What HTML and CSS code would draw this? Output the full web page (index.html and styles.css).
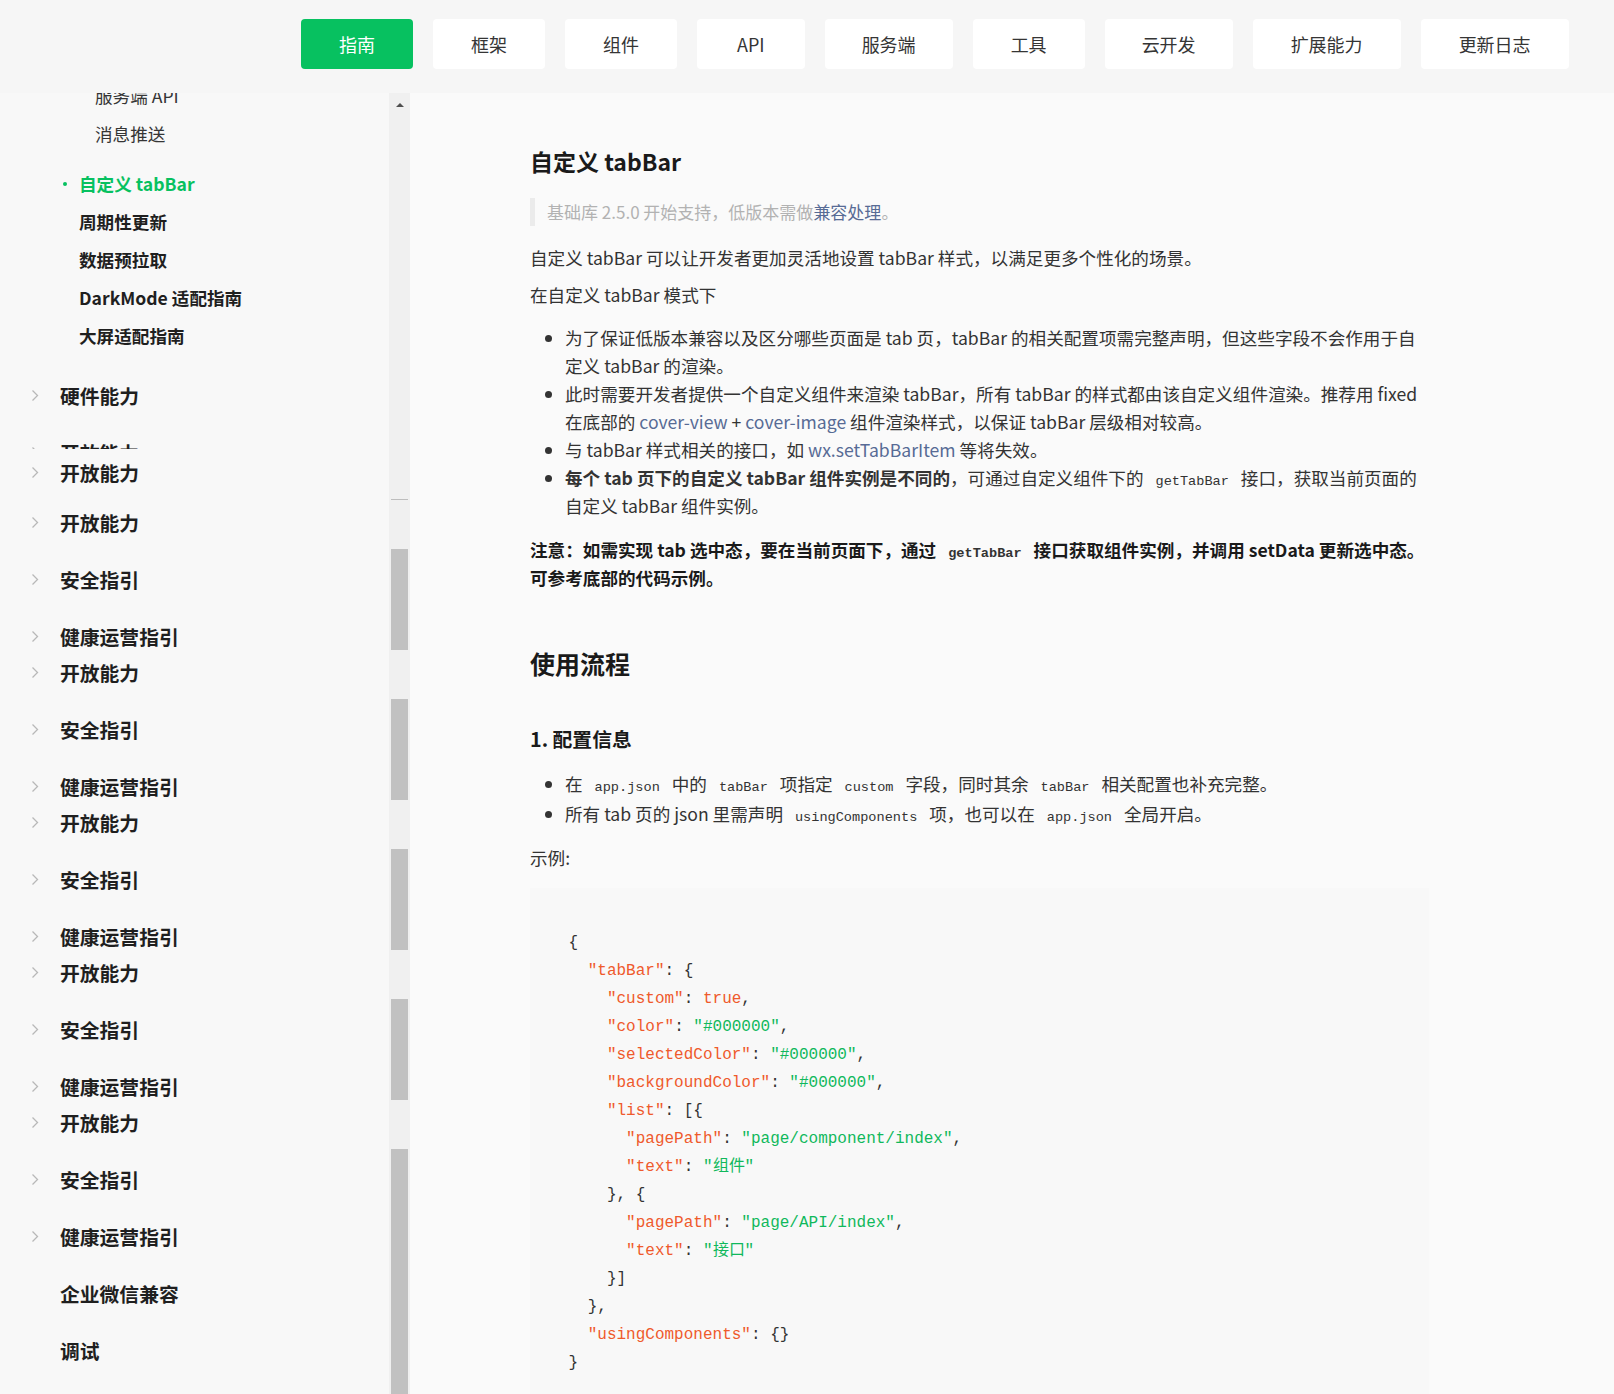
FILE: index.html
```html
<!DOCTYPE html>
<html lang="zh-CN">
<head>
<meta charset="utf-8">
<title>自定义 tabBar</title>
<link rel="stylesheet" href="styles.css">
</head>
<body>
<header class="topbar">
  <nav class="nav">
    <a class="nav-btn active">指南</a>
    <a class="nav-btn">框架</a>
    <a class="nav-btn">组件</a>
    <a class="nav-btn api">API</a>
    <a class="nav-btn w3">服务端</a>
    <a class="nav-btn">工具</a>
    <a class="nav-btn w3">云开发</a>
    <a class="nav-btn">扩展能力</a>
    <a class="nav-btn">更新日志</a>
  </nav>
</header>
<div class="layout">
  <aside class="sidebar">
    <div class="side-list">
      <a class="sub lvl3 first">服务端 API</a>
      <a class="sub lvl3">消息推送</a>
      <a class="sub active group-start"><span class="dot"></span>自定义 tabBar</a>
      <a class="sub">周期性更新</a>
      <a class="sub">数据预拉取</a>
      <a class="sub">DarkMode 适配指南</a>
      <a class="sub">大屏适配指南</a>
      <a class="top section-start"><svg class="chev" viewBox="0 0 8 13"><path d="M1.5 1.5 6.5 6.5 1.5 11.5"/></svg>硬件能力</a>
      <div class="clip"><a class="top"><svg class="chev" viewBox="0 0 8 13"><path d="M1.5 1.5 6.5 6.5 1.5 11.5"/></svg>开放能力</a></div>
      <a class="top after-clip"><svg class="chev" viewBox="0 0 8 13"><path d="M1.5 1.5 6.5 6.5 1.5 11.5"/></svg>开放能力</a>
      <a class="top overlap-s"><svg class="chev" viewBox="0 0 8 13"><path d="M1.5 1.5 6.5 6.5 1.5 11.5"/></svg>开放能力</a>
      <a class="top"><svg class="chev" viewBox="0 0 8 13"><path d="M1.5 1.5 6.5 6.5 1.5 11.5"/></svg>安全指引</a>
      <a class="top"><svg class="chev" viewBox="0 0 8 13"><path d="M1.5 1.5 6.5 6.5 1.5 11.5"/></svg>健康运营指引</a>
      <a class="top overlap"><svg class="chev" viewBox="0 0 8 13"><path d="M1.5 1.5 6.5 6.5 1.5 11.5"/></svg>开放能力</a>
      <a class="top"><svg class="chev" viewBox="0 0 8 13"><path d="M1.5 1.5 6.5 6.5 1.5 11.5"/></svg>安全指引</a>
      <a class="top"><svg class="chev" viewBox="0 0 8 13"><path d="M1.5 1.5 6.5 6.5 1.5 11.5"/></svg>健康运营指引</a>
      <a class="top overlap"><svg class="chev" viewBox="0 0 8 13"><path d="M1.5 1.5 6.5 6.5 1.5 11.5"/></svg>开放能力</a>
      <a class="top"><svg class="chev" viewBox="0 0 8 13"><path d="M1.5 1.5 6.5 6.5 1.5 11.5"/></svg>安全指引</a>
      <a class="top"><svg class="chev" viewBox="0 0 8 13"><path d="M1.5 1.5 6.5 6.5 1.5 11.5"/></svg>健康运营指引</a>
      <a class="top overlap"><svg class="chev" viewBox="0 0 8 13"><path d="M1.5 1.5 6.5 6.5 1.5 11.5"/></svg>开放能力</a>
      <a class="top"><svg class="chev" viewBox="0 0 8 13"><path d="M1.5 1.5 6.5 6.5 1.5 11.5"/></svg>安全指引</a>
      <a class="top"><svg class="chev" viewBox="0 0 8 13"><path d="M1.5 1.5 6.5 6.5 1.5 11.5"/></svg>健康运营指引</a>
      <a class="top overlap"><svg class="chev" viewBox="0 0 8 13"><path d="M1.5 1.5 6.5 6.5 1.5 11.5"/></svg>开放能力</a>
      <a class="top"><svg class="chev" viewBox="0 0 8 13"><path d="M1.5 1.5 6.5 6.5 1.5 11.5"/></svg>安全指引</a>
      <a class="top"><svg class="chev" viewBox="0 0 8 13"><path d="M1.5 1.5 6.5 6.5 1.5 11.5"/></svg>健康运营指引</a>
      <a class="top"><span class="chev-space"></span>企业微信兼容</a>
      <a class="top"><span class="chev-space"></span>调试</a>
    </div>
    <div class="scrollbar">
      <span class="sb-arrow"></span>
      <span class="sb-line"></span>
      <span class="sb-thumb"></span>
      <span class="sb-thumb"></span>
      <span class="sb-thumb"></span>
      <span class="sb-thumb"></span>
      <span class="sb-thumb last"></span>
    </div>
  </aside>
  <main class="content">
    <article class="article">
      <h2 class="title">自定义 tabBar</h2>
      <blockquote class="quote">基础库 2.5.0 开始支持，低版本需做<a class="link">兼容处理</a>。</blockquote>
      <p class="para">自定义 tabBar 可以让开发者更加灵活地设置 tabBar 样式，以满足更多个性化的场景。</p>
      <p class="para">在自定义 tabBar 模式下</p>
      <ul class="points">
        <li>为了保证低版本兼容以及区分哪些页面是 tab 页，tabBar 的相关配置项需完整声明，但这些字段不会作用于自<br>定义 tabBar 的渲染。</li>
        <li>此时需要开发者提供一个自定义组件来渲染 tabBar，所有 tabBar 的样式都由该自定义组件渲染。推荐用 fixed<br>在底部的 <a class="link">cover-view</a> + <a class="link">cover-image</a> 组件渲染样式，以保证 tabBar 层级相对较高。</li>
        <li>与 tabBar 样式相关的接口，如 <a class="link">wx.setTabBarItem</a> 等将失效。</li>
        <li><strong>每个 tab 页下的自定义 tabBar 组件实例是不同的</strong>，可通过自定义组件下的 <code class="ic">getTabBar</code> 接口，获取当前页面的<br>自定义 tabBar 组件实例。</li>
      </ul>
      <p class="warn"><strong>注意：如需实现 tab 选中态，要在当前页面下，通过 <code class="ic">getTabBar</code> 接口获取组件实例，并调用 setData 更新选中态。<br>可参考底部的代码示例。</strong></p>
      <h2 class="section">使用流程</h2>
      <h3 class="step">1. 配置信息</h3>
      <ul class="cfg">
        <li>在 <code class="ic">app.json</code> 中的 <code class="ic">tabBar</code> 项指定 <code class="ic">custom</code> 字段，同时其余 <code class="ic">tabBar</code> 相关配置也补充完整。</li>
        <li>所有 tab 页的 json 里需声明 <code class="ic">usingComponents</code> 项，也可以在 <code class="ic">app.json</code> 全局开启。</li>
      </ul>
      <p class="example">示例:</p>
<pre class="code">{
  <span class="k">"tabBar"</span>: {
    <span class="k">"custom"</span>: <span class="k">true</span>,
    <span class="k">"color"</span>: <span class="s">"#000000"</span>,
    <span class="k">"selectedColor"</span>: <span class="s">"#000000"</span>,
    <span class="k">"backgroundColor"</span>: <span class="s">"#000000"</span>,
    <span class="k">"list"</span>: [{
      <span class="k">"pagePath"</span>: <span class="s">"page/component/index"</span>,
      <span class="k">"text"</span>: <span class="s">"组件"</span>
    }, {
      <span class="k">"pagePath"</span>: <span class="s">"page/API/index"</span>,
      <span class="k">"text"</span>: <span class="s">"接口"</span>
    }]
  },
  <span class="k">"usingComponents"</span>: {}
}</pre>
    </article>
  </main>
</div>
</body>
</html>
```
FILE: styles.css
```css
html, body {
  margin: 0;
  padding: 0;
}
body {
  width: 1614px;
  height: 1394px;
  overflow: hidden;
  background: #fafafa;
  font-family: "Noto Sans CJK SC", "Noto Sans", sans-serif;
  color: #333;
}
a { text-decoration: none; cursor: pointer; }

/* top navigation */
.topbar {
  height: 93px;
  box-sizing: border-box;
  background: #f6f6f6;
  padding: 19px 0 0 301px;
}
.nav {
  display: flex;
  gap: 20px;
}
.nav-btn {
  display: block;
  height: 50px;
  line-height: 50px;
  padding: 0 38px;
  background: #fff;
  border-radius: 4px;
  font-size: 18px;
  color: #353535;
}
.nav-btn.api { padding: 0 40px; }
.nav-btn.w3 { padding: 0 37px; }
.nav-btn.active {
  background: #07c160;
  color: #fff;
}

/* layout */
.layout {
  display: flex;
  height: 1301px;
  overflow: hidden;
}

/* sidebar */
.sidebar {
  width: 410px;
  flex-shrink: 0;
  display: flex;
  background: #f8f8f8;
  overflow: hidden;
}
.side-list {
  width: 389px;
  flex-shrink: 0;
}
.sub {
  display: flex;
  align-items: center;
  height: 38px;
  padding-left: 79px;
  font-size: 17.6px;
  font-weight: 700;
  color: #1f1f1f;
  white-space: nowrap;
}
.sub.lvl3 {
  padding-left: 95px;
  font-weight: 400;
  color: #353535;
}
.sub.first { margin-top: -17px; }
.sub.group-start { margin-top: 12.5px; }
.sub.active {
  color: #07c160;
  padding-left: 63px;
}
.dot {
  width: 4px;
  height: 4px;
  border-radius: 50%;
  background: #07c160;
  margin-right: 12px;
}
.top {
  display: flex;
  align-items: center;
  height: 57px;
  padding-left: 31px;
  font-size: 19.8px;
  font-weight: 700;
  color: #1f1f1f;
  white-space: nowrap;
}
.chev {
  width: 8px;
  height: 13px;
  margin-right: 21px;
  fill: none;
  stroke: #b8b8b8;
  stroke-width: 1.3;
}
.chev-space {
  width: 8px;
  margin-right: 21px;
}
.top.section-start { margin-top: 12px; }
.clip {
  height: 25.5px;
  overflow: hidden;
}
.top.after-clip { margin-top: -5.5px; }
.top.overlap-s { margin-top: -7px; }
.top.overlap { margin-top: -21px; }

/* fake scrollbar */
.scrollbar {
  width: 21px;
  flex-shrink: 0;
  background: #f0f0f0;
  display: flex;
  flex-direction: column;
  align-items: center;
}
.sb-arrow {
  margin-top: 10px;
  width: 0;
  height: 0;
  border-left: 4.5px solid transparent;
  border-right: 4.5px solid transparent;
  border-bottom: 4.5px solid #505050;
  flex-shrink: 0;
}
.sb-line {
  margin-top: 392px;
  width: 17px;
  height: 1px;
  background: #bdbdbd;
  flex-shrink: 0;
}
.sb-thumb {
  margin-top: 49px;
  width: 17px;
  height: 101px;
  background: #c1c1c1;
  flex-shrink: 0;
}
.sb-thumb.last { flex: 1; }

/* content */
.content {
  flex: 1;
  padding: 52px 0 0 120px;
  background: #fafafa;
}
.article {
  width: 899px;
  font-size: 17.6px;
  line-height: 28px;
  color: #333;
}
.title {
  margin: 0;
  font-size: 23px;
  line-height: 32px;
  font-weight: 700;
  color: #1a1a1a;
}
.quote {
  margin: 21px 0 18px;
  border-left: 5px solid #ebebeb;
  padding-left: 12px;
  font-size: 17px;
  line-height: 28px;
  color: #b2b2b2;
}
.link { color: #576b95; }
.para { margin: 0 0 9px; }
.points {
  margin: 15px 0 0;
  padding-left: 35px;
}
.ic {
  font-family: "Liberation Mono", "DejaVu Sans Mono", monospace;
  font-size: 13.6px;
  line-height: 1;
  padding: 0 8px;
  color: #333;
}
.warn {
  margin: 16px 0 0;
  color: #1a1a1a;
}
.section {
  margin: 53px 0 0;
  font-size: 25px;
  line-height: 36px;
  font-weight: 700;
  color: #1a1a1a;
}
.step {
  margin: 43px 0 0;
  font-size: 19.8px;
  line-height: 30px;
  font-weight: 700;
  color: #1a1a1a;
}
.cfg {
  margin: 15px 0 0;
  padding-left: 35px;
  line-height: 30px;
}
.example { margin: 15px 0 0; }
.code {
  margin: 16px 0 0;
  box-sizing: border-box;
  width: 899px;
  height: 520px;
  padding: 41px 0 0 38.5px;
  background: #f8f8f8;
  font-family: "Liberation Mono", "DejaVu Sans Mono", monospace;
  font-size: 16px;
  line-height: 28px;
  color: #333;
}
.k { color: #ef5a2c; }
.s { color: #10b85c; }
```
